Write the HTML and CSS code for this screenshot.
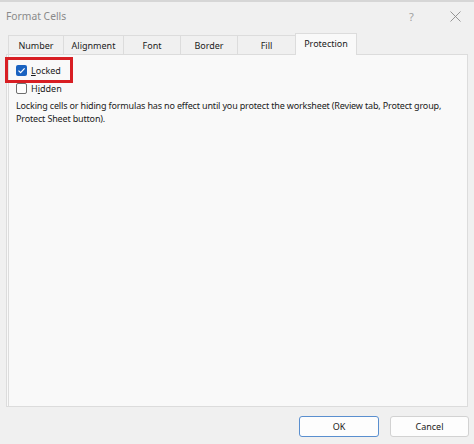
FILE: index.html
```html
<!DOCTYPE html>
<html>
<head>
<meta charset="utf-8">
<link rel="stylesheet" href="styles.css">
</head>
<body>
<div class="dialog">
  <div class="titlebar">
    <span class="title">Format Cells</span>
    <div class="title-btns">
      <span class="help">?</span>
      <svg class="close" width="11" height="11" viewBox="0 0 11 11"><path d="M0.5 0.5 L10.5 10.5 M10.5 0.5 L0.5 10.5" stroke="#8a8a8a" stroke-width="0.9" fill="none"/></svg>
    </div>
  </div>
  <div class="tabs">
    <div class="tab t-number">Number</div>
    <div class="tab t-align">Alignment</div>
    <div class="tab t-font">Font</div>
    <div class="tab t-border">Border</div>
    <div class="tab t-fill">Fill</div>
    <div class="tab active t-prot">Protection</div>
  </div>
  <div class="panel">
    <label class="check">
      <span class="box checked"><svg width="11" height="11" viewBox="0 0 11 11"><path d="M2.5 5.6 L4.6 7.6 L8.6 3.3" stroke="#fff" stroke-width="1.2" fill="none"/></svg></span>
      <span><u>L</u>ocked</span>
    </label>
    <label class="check">
      <span class="box"></span>
      <span>H<u>i</u>dden</span>
    </label>
    <p class="note">Locking cells or hiding formulas has no effect until you protect the worksheet (Review tab, Protect group, Protect Sheet button).</p>
  </div>
  <div class="footer">
    <button class="btn ok">OK</button>
    <button class="btn">Cancel</button>
  </div>
  <div class="highlight"></div>
</div>
</body>
</html>
```

FILE: styles.css
```css
html, body {
  margin: 0;
  padding: 0;
}
body {
  width: 474px;
  height: 444px;
  overflow: hidden;
  background: #f0f0f0;
  font-family: "Noto Sans", "Open Sans", sans-serif;
  color: #1b1b1b;
}
.dialog {
  position: relative;
  width: 474px;
  height: 444px;
  display: flex;
  flex-direction: column;
  box-sizing: border-box;
  border-top: 2px solid #d6d6d6;
  background: #f0f0f0;
}
.titlebar {
  height: 31px;
  display: flex;
  align-items: center;
  justify-content: space-between;
  padding: 0 0 0 6px;
  box-sizing: border-box;
}
.title {
  font-size: 10.3px;
  color: #8a8a8a;
  margin-top: -3px;
}
.title-btns {
  display: flex;
  align-items: center;
  margin-top: -3px;
}
.help {
  font-size: 11px;
  color: #a0a0a0;
  width: 8px;
  margin-right: 33px;
}
.close {
  margin-right: 13px;
  display: block;
}
.tabs {
  display: flex;
  align-items: flex-end;
  height: 21px;
  padding-left: 8px;
  position: relative;
  z-index: 1;
}
.tab {
  height: 19px;
  box-sizing: border-box;
  border: 1px solid #dcdcdc;
  border-bottom: none;
  border-right: none;
  font-size: 9px;
  display: flex;
  align-items: center;
  justify-content: center;
  background: #f0f0f0;
  color: #1b1b1b;
}
.t-number { width: 55px; }
.t-align { width: 60px; }
.t-font { width: 57px; }
.t-border { width: 57px; }
.t-fill { width: 58px; }
.t-prot { width: 62px; }
.tab.active {
  height: 22px;
  margin-bottom: -1px;
  padding-bottom: 2px;
  background: #f9f9f9;
  border-right: 1px solid #dcdcdc;
}
.panel {
  flex: 1;
  margin: 0 6px 0 6px;
  border: 1px solid #dcdcdc;
  border-left: 3px double #dcdcdc;
  background: #f9f9f9;
  padding: 6px 4px 0 7px;
}
.check {
  display: flex;
  align-items: center;
  height: 18px;
  font-size: 9px;
  gap: 4px;
}
.box {
  width: 11px;
  height: 11px;
  box-sizing: border-box;
  border: 1px solid #6e6e6e;
  border-radius: 2px;
  background: #fdfdfd;
  display: block;
}
.box svg { display: block; }
.box.checked {
  border: none;
  background: #1a62c0;
}
.note {
  margin: 2px 0 0 0;
  font-size: 9px;
  line-height: 13px;
  letter-spacing: -0.16px;
}
.footer {
  height: 37px;
  display: flex;
  justify-content: flex-end;
  align-items: flex-start;
  padding: 9px 5px 0 0;
  box-sizing: border-box;
  gap: 11px;
}
.btn {
  width: 79px;
  height: 21px;
  font-family: inherit;
  font-size: 9px;
  color: #1b1b1b;
  background: #fdfdfd;
  border: 1px solid #d2d2d2;
  border-radius: 3px;
  padding: 0;
}
.btn.ok {
  width: 80px;
  border-color: #5a8fcf;
}
.highlight {
  position: absolute;
  left: 5px;
  top: 55px;
  width: 68px;
  height: 26px;
  box-sizing: border-box;
  border: 3px solid #d81e23;
}
```
